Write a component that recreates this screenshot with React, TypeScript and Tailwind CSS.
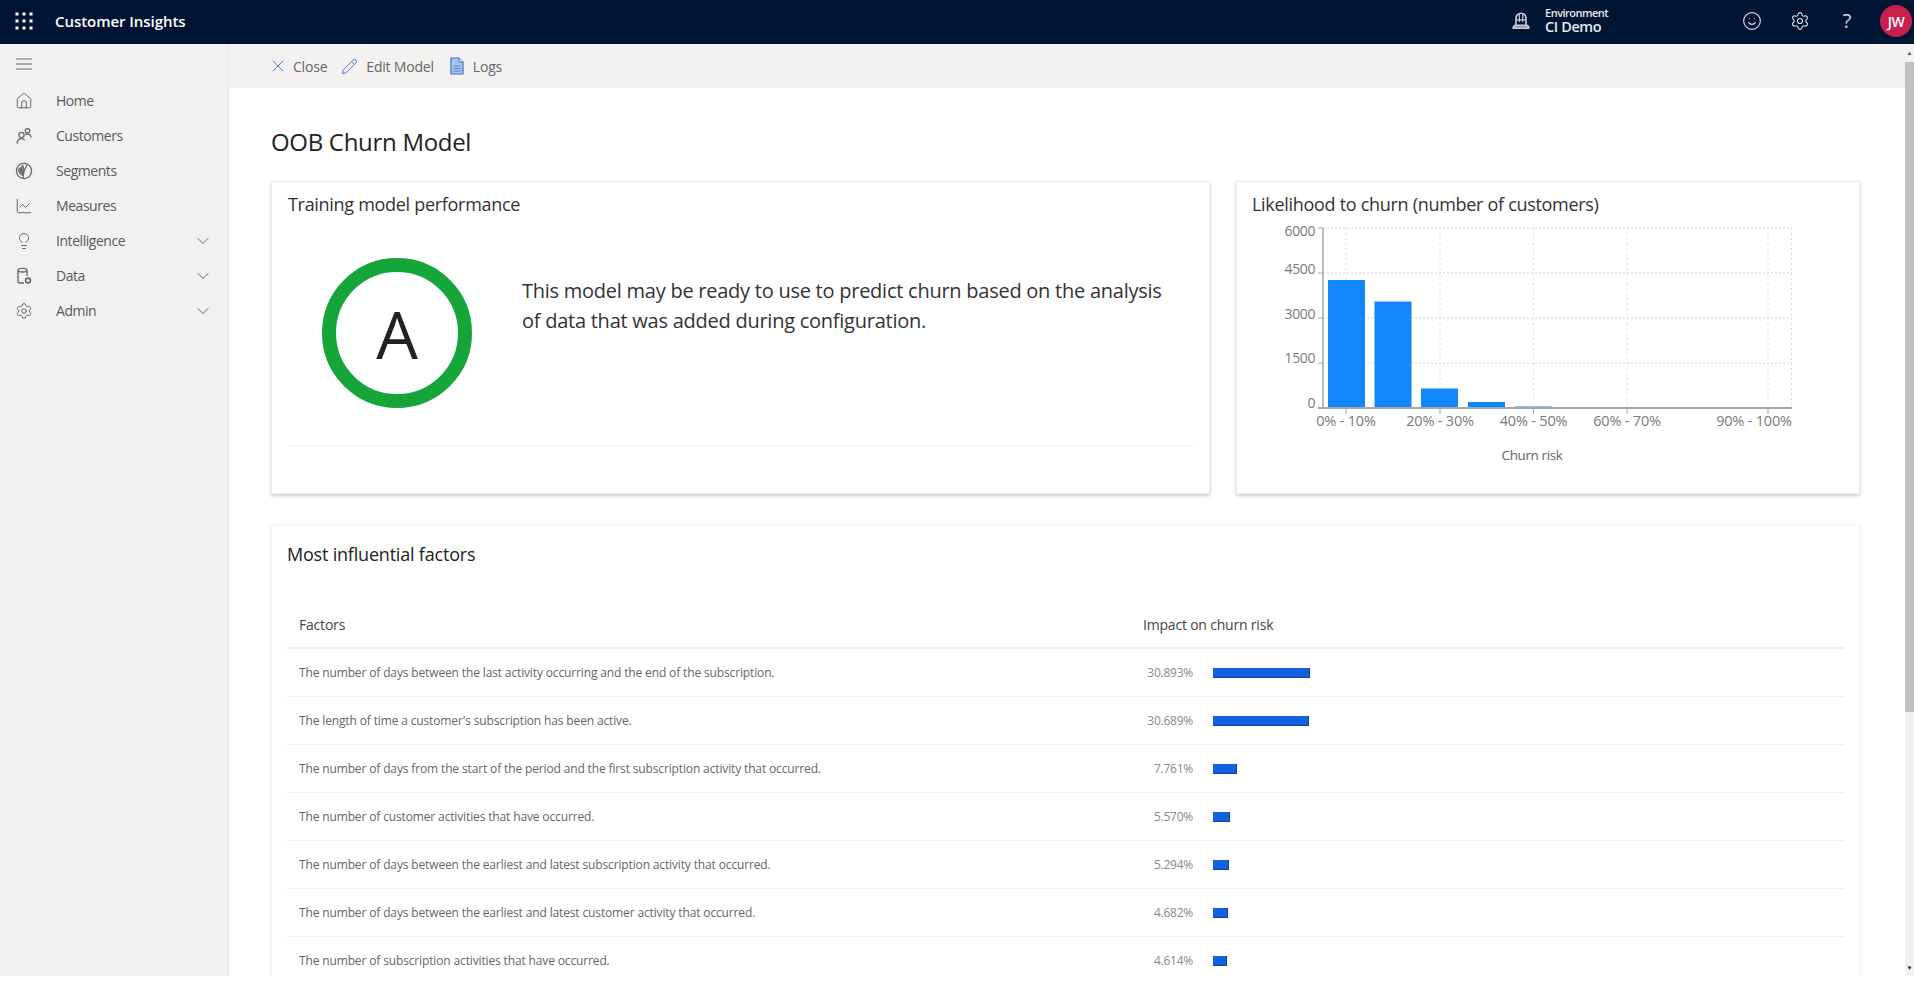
import React from 'react';
import { ChevronDown, House, Lightbulb, Settings, Smile, ChartLine, X, Pencil } from 'lucide-react';

const font = { fontFamily: '"Open Sans", "Noto Sans", sans-serif' };

const Waffle = () => (
  <svg width="18" height="18" viewBox="0 0 18 18" fill="#fff">
    {[2, 9, 16].map((y) =>
      [2, 9, 16].map((x) => <rect key={`${x}-${y}`} x={x - 1.5} y={y - 1.5} width="3" height="3" />)
    )}
  </svg>
);

const CustomersIcon = () => (
  <svg width="18" height="18" viewBox="0 0 18 18" fill="none" stroke="#666" strokeWidth="1.3">
    <circle cx="6.5" cy="8" r="2.6" />
    <path d="M2 16.5c.4-3 2-4.8 4.5-4.8 1.4 0 2.4.5 3.2 1.4" />
    <circle cx="12.5" cy="3.8" r="2.2" />
    <path d="M10.5 8c.6-.5 1.2-.8 2-.8 2 0 3.3 1.3 3.6 3.3" />
  </svg>
);

const SegmentsIcon = () => (
  <svg width="18" height="18" viewBox="0 0 18 18" fill="none" stroke="#666" strokeWidth="1.3">
    <circle cx="9" cy="9" r="7.6" />
    <path d="M8.5 2.5 3 7c0 3 1.5 6 5 7l1.5-5z" fill="#777" stroke="none" />
    <path d="M9 9l3-6M9 9l-1 7" />
  </svg>
);

const DataIcon = () => (
  <svg width="18" height="18" viewBox="0 0 18 18" fill="none" stroke="#666" strokeWidth="1.3">
    <path d="M9 16H5.500C4 16 3 15.400 3 14.500V3.500" />
    <ellipse cx="7.500" cy="3.200" rx="4.500" ry="1.800" />
    <path d="M12 3.500V9" />
    <circle cx="13" cy="13.500" r="2.400" strokeWidth="1.600" />
  </svg>
);

const EnvIcon = () => (
  <svg width="20" height="20" viewBox="0 0 18 18" fill="none" stroke="#c9ced6" strokeWidth="1.5">
    <path d="M4.500 13V6.500a4.500 4.500 0 0 1 9 0V13" />
    <path d="M7.500 3v7M10.500 3v7M5 8h8" strokeWidth="1.100" />
    <path d="M2 15.500c0-1.800 1-2.700 2.500-2.700h9c1.500 0 2.500.9 2.500 2.700z" fill="#8b93a1" />
  </svg>
);

const LogsIcon = () => (
  <svg width="14" height="18" viewBox="0 0 14 18">
    <path d="M1 1h8l4 4v12H1z" fill="#a9c4ef" stroke="#3f74c4" strokeWidth="1.200" />
    <path d="M9 1v4h4" fill="#fff" stroke="#3f74c4" strokeWidth="1" />
    <path d="M3.500 9h7M3.500 11.500h7M3.500 14h7" stroke="#3f74c4" strokeWidth="0.800" />
  </svg>
);

const navItems = [
  { label: 'Home', icon: <House size={18} strokeWidth={1.3} color="#666" /> },
  { label: 'Customers', icon: <CustomersIcon /> },
  { label: 'Segments', icon: <SegmentsIcon /> },
  { label: 'Measures', icon: <ChartLine size={18} strokeWidth={1.3} color="#666" /> },
  { label: 'Intelligence', icon: <Lightbulb size={18} strokeWidth={1.3} color="#666" />, expand: true },
  { label: 'Data', icon: <DataIcon />, expand: true },
  { label: 'Admin', icon: <Settings size={18} strokeWidth={1.3} color="#666" />, expand: true },
];

const factors = [
  { text: 'The number of days between the last activity occurring and the end of the subscription.', pct: '30.893%', w: 97 },
  { text: "The length of time a customer's subscription has been active.", pct: '30.689%', w: 96 },
  { text: 'The number of days from the start of the period and the first subscription activity that occurred.', pct: '7.761%', w: 24 },
  { text: 'The number of customer activities that have occurred.', pct: '5.570%', w: 17 },
  { text: 'The number of days between the earliest and latest subscription activity that occurred.', pct: '5.294%', w: 16 },
  { text: 'The number of days between the earliest and latest customer activity that occurred.', pct: '4.682%', w: 15 },
  { text: 'The number of subscription activities that have occurred.', pct: '4.614%', w: 14 },
];

// coordinates in this chart are page pixels, the viewBox takes care of the offset
const ChurnChart = () => {
  const gridY = [228, 273, 318, 363];
  const gridX = [1346, 1440, 1533.5, 1627, 1768, 1791.5];
  const bars = [
    { x: 1328, top: 280 },
    { x: 1374.5, top: 301.5 },
    { x: 1421, top: 388.5 },
    { x: 1468, top: 402 },
    { x: 1515, top: 406.5 },
  ];
  const yLabels = [
    { t: '6000', y: 231 },
    { t: '4500', y: 269 },
    { t: '3000', y: 314 },
    { t: '1500', y: 358 },
    { t: '0', y: 403 },
  ];
  const xLabels = [
    { t: '0% - 10%', x: 1346 },
    { t: '20% - 30%', x: 1440 },
    { t: '40% - 50%', x: 1533.5 },
    { t: '60% - 70%', x: 1627 },
    { t: '90% - 100%', x: 1754 },
  ];
  return (
    <svg width="622" height="277" viewBox="1237 216 622 277" className="block">
      {gridY.map((y) => (
        <line key={y} x1="1323" x2="1792" y1={y} y2={y} stroke="#d4d4d4" strokeDasharray="2 2" />
      ))}
      {gridX.map((x) => (
        <line key={x} x1={x} x2={x} y1="228" y2="408" stroke="#dcdcdc" strokeDasharray="2 3" />
      ))}
      {bars.map((b) => (
        <rect key={b.x} x={b.x} y={b.top} width="37" height={408 - b.top} fill="#1287fb" />
      ))}
      <line x1="1323" x2="1323" y1="228" y2="408" stroke="#a6a6a6" strokeWidth="1.5" />
      <line x1="1318" x2="1792" y1="408" y2="408" stroke="#a6a6a6" strokeWidth="2" />
      {[228, 273, 318, 363].map((y) => (
        <line key={y} x1="1318" x2="1323" y1={y} y2={y} stroke="#a6a6a6" />
      ))}
      {[1346, 1440, 1533.5, 1627, 1768].map((x) => (
        <line key={x} x1={x} x2={x} y1="408" y2="414" stroke="#a6a6a6" />
      ))}
      {yLabels.map((l) => (
        <text key={l.t} x="1315" y={l.y + 5} textAnchor="end" fontSize="14" fill="#7a7a7a" style={font} letterSpacing="-0.4">
          {l.t}
        </text>
      ))}
      {xLabels.map((l) => (
        <text key={l.t} x={l.x} y="426" textAnchor="middle" fontSize="14.500" fill="#7a7a7a" style={font} letterSpacing="-0.2">
          {l.t}
        </text>
      ))}
      <text x="1532" y="460" textAnchor="middle" fontSize="13.500" fill="#666" style={font} letterSpacing="-0.4">
        Churn risk
      </text>
    </svg>
  );
};

const App: React.FC = () => {
  return (
    <div className="h-[999px] bg-white overflow-hidden" style={font}>
      <div className="h-[976px] flex flex-col overflow-hidden">
        {/* top bar */}
        <header className="h-[44px] shrink-0 bg-[#001433] flex items-center pb-[2px] text-white">
          <div className="w-[48px] flex justify-center">
            <Waffle />
          </div>
          <span className="ml-[7px] text-[15px] font-semibold tracking-[-0.05px]">Customer Insights</span>
          <div className="ml-auto flex items-center">
            <EnvIcon />
            <div className="ml-[14px] w-[197px] leading-none text-[#e6e9ee]">
              <div className="text-[11px] font-semibold tracking-[-0.5px]">Environment</div>
              <div className="text-[14.5px] font-semibold tracking-[-0.4px] mt-[2px]">CI Demo</div>
            </div>
            <Smile size={20} strokeWidth={1.4} color="#d5d9e0" />
            <Settings size={20} strokeWidth={1.4} color="#d5d9e0" className="ml-[28px]" />
            <span className="ml-[29px] w-[16px] text-center text-[20px] text-[#d5d9e0]">?</span>
            <span className="ml-[25px] mr-[2px] w-[32px] h-[32px] rounded-full bg-[#c81f4e] flex items-center justify-center text-[14px] font-semibold tracking-[-0.5px] text-white">
              JW
            </span>
          </div>
        </header>

        <div className="flex-1 flex min-h-0">
          {/* left nav */}
          <aside className="w-[229px] shrink-0 bg-[#f1f1f1] border-r border-[#e6e6e6] text-[14px] text-[#5a5a5a]">
            <div className="h-[40px] flex items-center pl-[16px]">
              <svg width="16" height="12" viewBox="0 0 16 12" stroke="#666" strokeWidth="1">
                <path d="M0 1h16M0 6h16M0 11h16" />
              </svg>
            </div>
            <ul className="mt-[-1px]">
              {navItems.map((item) => (
                <li key={item.label} className="h-[35px] flex items-center">
                  <span className="w-[48px] flex justify-center">{item.icon}</span>
                  <span className="ml-[8px] tracking-[-0.45px]">{item.label}</span>
                  {item.expand && <ChevronDown size={20} strokeWidth={1.2} color="#666" className="ml-auto mr-[15px]" />}
                </li>
              ))}
            </ul>
          </aside>

          <main className="flex-1 min-w-0 flex flex-col">
            <div className="h-[44px] shrink-0 bg-[#f3f2f1] flex items-center pl-[39px] text-[14px] text-[#666] tracking-[-0.2px]">
              <X size={20} strokeWidth={1.1} color="#3f74c4" />
              <span className="ml-[5px]">Close</span>
              <Pencil size={17} strokeWidth={1.3} color="#3f74c4" className="ml-[14px]" />
              <span className="ml-[8px]">Edit Model</span>
              <span className="ml-[16px]">
                <LogsIcon />
              </span>
              <span className="ml-[9px]">Logs</span>
            </div>

            <div className="flex-1 min-h-0 overflow-hidden pl-[42px]">
              <h1 className="mt-[37px] h-[34px] leading-[34px] text-[24px] text-[#222] tracking-[-0.3px]">OOB Churn Model</h1>

              <div className="mt-[22px] flex gap-[26px]">
                <section className="w-[939px] h-[313px] bg-white border border-[#ececec] shadow-[0_2px_4px_rgba(0,0,0,0.18)] px-[16px]">
                  <h2 className="pt-[10px] text-[18px] leading-[24px] text-[#333] tracking-[-0.3px]">Training model performance</h2>
                  <div className="mt-[42px] flex items-start">
                    <div className="ml-[34px] w-[150px] h-[150px] rounded-full border-[14px] border-[#16a538] flex items-center justify-center">
                      <span className="text-[66px] leading-none text-[#222]">A</span>
                    </div>
                    <p className="ml-[50px] mt-[18px] w-[650px] text-[20px] leading-[30px] text-[#333] tracking-[-0.25px]">
                      This model may be ready to use to predict churn based on the analysis of data that was added during configuration.
                    </p>
                  </div>
                  <div className="mt-[37px] border-t border-[#f2f2f2]" />
                </section>

                <section className="w-[624px] h-[313px] bg-white border border-[#ececec] shadow-[0_2px_4px_rgba(0,0,0,0.18)]">
                  <h2 className="pl-[15px] pt-[10px] text-[18px] leading-[24px] text-[#333] tracking-[-0.3px]">
                    Likelihood to churn (number of customers)
                  </h2>
                  <ChurnChart />
                </section>
              </div>

              <section className="mt-[31px] w-[1589px] bg-white border-l border-r border-t border-[#f4f4f4] shadow-[0_1px_5px_rgba(0,0,0,0.1)] px-[15px] pb-[40px]">
                <h2 className="pt-[16px] text-[18px] leading-[24px] text-[#222] tracking-[-0.2px]">Most influential factors</h2>
                <div className="mt-[36px] h-[47px] flex items-center border-b-2 border-[#efefef] text-[14px] text-[#444] tracking-[-0.2px]">
                  <span className="pl-[12px] w-[856px]">Factors</span>
                  <span>Impact on churn risk</span>
                </div>
                {factors.map((f) => (
                  <div key={f.pct} className="h-[48px] flex items-center border-b border-[#f0f0f0] text-[12px] text-[#666] tracking-[-0.14px]">
                    <span className="pl-[12px] w-[844px] shrink-0">{f.text}</span>
                    <span className="w-[62px] text-right text-[#8a8a8a] tracking-[-0.25px]">{f.pct}</span>
                    <span className="ml-[20px] h-[10px] bg-[#1560e0] border-b border-r border-[#0d3f9c]" style={{ width: f.w }} />
                  </div>
                ))}
              </section>
            </div>
          </main>

          {/* scrollbar */}
          <div className="w-[9px] shrink-0 bg-[#f1f1f1] flex flex-col">
            <div className="h-[18px] flex items-center justify-center text-[#555] text-[6px] leading-none">▲</div>
            <div className="h-[650px] bg-[#c1c1c1]" />
            <div className="flex-1" />
            <div className="h-[16px] flex items-center justify-center text-[#222] text-[6px] leading-none">▼</div>
          </div>
        </div>
      </div>
    </div>
  );
};

export default App;
